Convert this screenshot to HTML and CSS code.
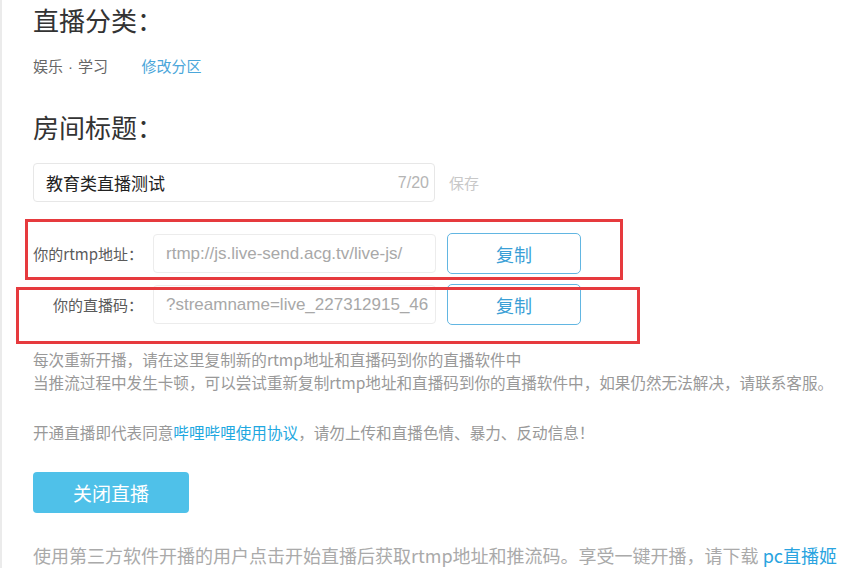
FILE: index.html
```html
<!DOCTYPE html>
<html>
<head>
  <title>直播设置</title>
  <link rel="stylesheet" href="styles.css">
</head>
<body>
  <div class="page">
    <h2 class="block-title">直播分类：</h2>
    <div class="category">
      <span class="category-name">娱乐<span class="dot">·</span>学习</span>
      <a class="link" href="#">修改分区</a>
    </div>

    <h2 class="block-title room-title">房间标题：</h2>
    <div class="title-row">
      <div class="title-input">
        <span class="title-text">教育类直播测试</span>
        <span class="count">7/20</span>
      </div>
      <span class="save">保存</span>
    </div>

    <div class="stream">
      <div class="stream-row">
        <span class="stream-label">你的rtmp地址：</span>
        <div class="stream-value">rtmp://js.live-send.acg.tv/live-js/</div>
        <button class="copy-btn">复制</button>
      </div>
      <div class="stream-row">
        <span class="stream-label">你的直播码：</span>
        <div class="stream-value">?streamname=live_227312915_46</div>
        <button class="copy-btn">复制</button>
      </div>
      <!-- annotation boxes drawn over the rows -->
      <div class="mark mark-rtmp"></div>
      <div class="mark mark-code"></div>
    </div>

    <div class="tips">
      <p>每次重新开播，请在这里复制新的rtmp地址和直播码到你的直播软件中<br>当推流过程中发生卡顿，可以尝试重新复制rtmp地址和直播码到你的直播软件中，如果仍然无法解决，请联系客服。</p>
      <p class="agree">开通直播即代表同意<a class="link" href="#">哔哩哔哩使用协议</a>，请勿上传和直播色情、暴力、反动信息！</p>
    </div>

    <button class="close-btn">关闭直播</button>

    <p class="third-party">使用第三方软件开播的用户点击开始直播后获取rtmp地址和推流码。享受一键开播，请下载 <a class="link" href="#">pc直播姬</a></p>
  </div>
</body>
</html>
```

FILE: styles.css
```css
body {
  margin: 0;
  background: #fff;
  font-family: "Noto Sans CJK SC", "Liberation Sans", sans-serif;
  color: #333;
  overflow: hidden;
}
.page {
  border-left: 2px solid #ebebeb;
  padding: 4px 0 0 31px;
  min-height: 568px;
  box-sizing: border-box;
}
.link {
  color: #2fa5dd;
  text-decoration: none;
}
.block-title {
  margin: 0;
  font-size: 26px;
  line-height: 32px;
  font-weight: normal;
  color: #333;
}
.room-title {
  margin-top: 34px;
}
.category {
  margin-top: 20px;
  font-size: 15px;
  line-height: 20px;
  color: #666;
}
.category .dot {
  font-family: "Liberation Sans", sans-serif;
  margin: 0 5px;
}
.category .link {
  margin-left: 30px;
  color: #4aa6da;
}

/* room title input */
.title-row {
  margin-top: 20px;
  display: flex;
  align-items: center;
}
.title-input {
  width: 402px;
  height: 39px;
  box-sizing: border-box;
  border: 1px solid #e7e7e7;
  border-radius: 4px;
  display: flex;
  align-items: center;
  justify-content: space-between;
  padding: 0 5px 0 12px;
}
.title-text {
  font-size: 17px;
  color: #222;
}
.count {
  font-family: "Liberation Sans", sans-serif;
  font-size: 16px;
  color: #b5b5b5;
}
.save {
  margin-left: 14px;
  font-size: 15px;
  color: #c8c8c8;
}

/* rtmp rows */
.stream {
  position: relative;
  margin-top: 31px;
}
.stream-row {
  display: flex;
  align-items: center;
  height: 41px;
}
.stream-row + .stream-row {
  margin-top: 10px;
}
.stream-label {
  width: 110px;
  text-align: right;
  font-size: 15px;
  color: #5a5a5a;
}
.stream-value {
  margin-left: 10px;
  width: 283px;
  height: 39px;
  box-sizing: border-box;
  border: 1px solid #ececec;
  border-radius: 4px;
  padding: 0 2px 0 12px;
  font-family: "Liberation Sans", sans-serif;
  font-size: 17px;
  line-height: 37px;
  color: #a8a8a8;
  white-space: nowrap;
  overflow: hidden;
}
.copy-btn {
  margin-left: 11px;
  width: 134px;
  height: 41px;
  background: #fff;
  border: 1px solid #62b6e2;
  border-radius: 5px;
  font-family: "Noto Sans CJK SC", sans-serif;
  font-size: 18px;
  color: #3b9fd6;
  padding: 0;
}
.mark {
  position: absolute;
  box-sizing: border-box;
  border: 3px solid #e63a3e;
}
.mark-rtmp {
  left: -8px;
  top: -14px;
  width: 598px;
  height: 61px;
}
.mark-code {
  left: -17px;
  top: 54px;
  width: 624px;
  height: 57px;
}

/* tips */
.tips {
  margin-top: 23px;
  font-size: 15.6px;
  line-height: 23px;
  color: #999;
}
.tips p {
  margin: 0;
}
.tips .agree {
  margin-top: 27px;
}
.tips .link {
  color: #1fa8e0;
}
.close-btn {
  display: block;
  margin-top: 28px;
  width: 156px;
  height: 41px;
  border: none;
  border-radius: 4px;
  background: #4fc1e9;
  color: #fff;
  font-family: "Noto Sans CJK SC", sans-serif;
  font-size: 19px;
  padding: 0;
}
.third-party {
  margin: 30px 0 0;
  font-size: 18px;
  line-height: 24px;
  color: #aaa;
  white-space: nowrap;
}
.third-party .link {
  color: #2aa4e0;
}
```
